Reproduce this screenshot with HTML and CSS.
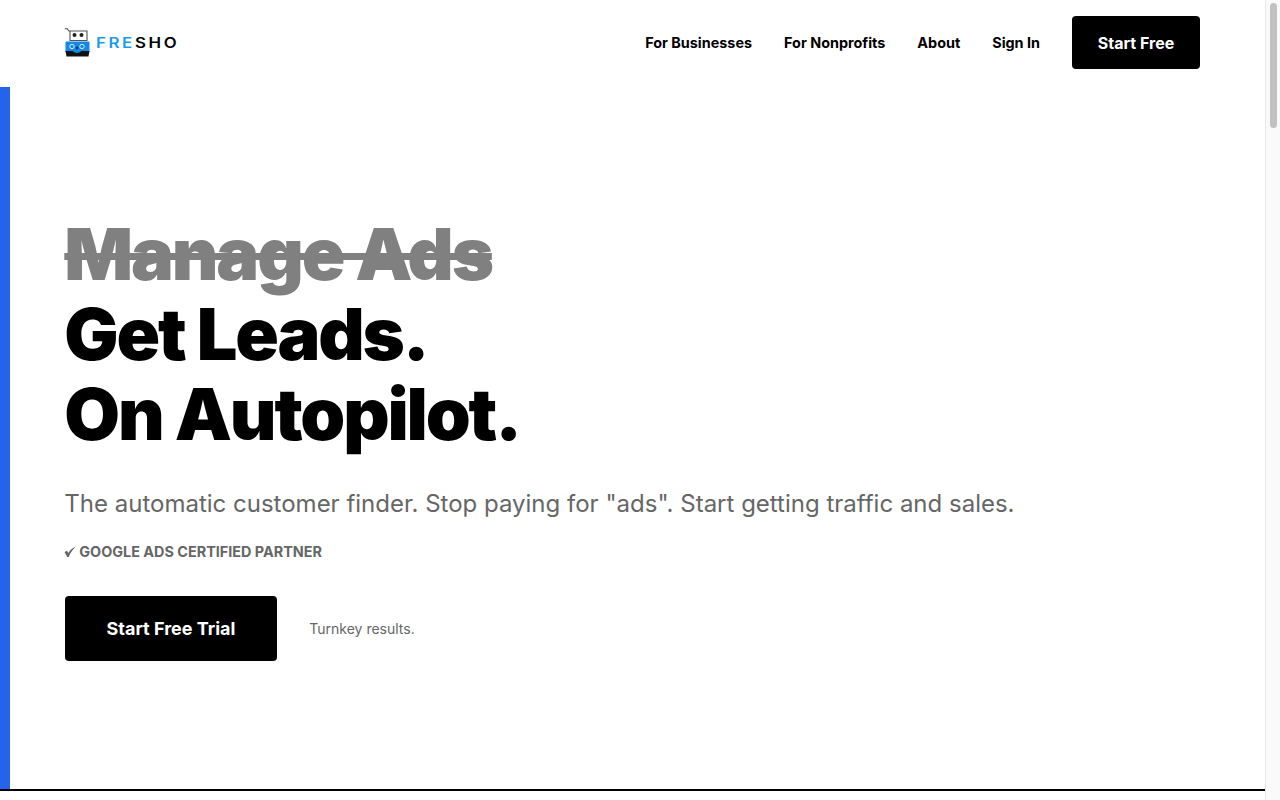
FILE: index.html
```html
<!DOCTYPE html>
<html lang="en">
<head>
    <meta charset="UTF-8">
    <meta name="viewport" content="width=device-width, initial-scale=1.0">
    <title>Fresho</title>
    <link rel="stylesheet" href="styles.css">
</head>
<body>
    <div class="page">
        <header class="site-header">
            <a class="logo" href="#">
                <svg class="logo-icon" width="26" height="30" viewBox="0 0 26 30" aria-hidden="true">
                    <path d="M0.8 0.8 H3.3 L5 3 H23 V12.5 H6 V3" fill="#fff" stroke="#555" stroke-width="1.1"/>
                    <circle cx="10.5" cy="7" r="2" fill="#222"/>
                    <circle cx="17.5" cy="7" r="2" fill="#222"/>
                    <rect x="1.5" y="13.5" width="24" height="11" rx="1" fill="#1688e6"/>
                    <circle cx="8" cy="18.5" r="2.2" fill="none" stroke="#d5edff" stroke-width="1"/>
                    <circle cx="18" cy="18.5" r="2.2" fill="none" stroke="#d5edff" stroke-width="1"/>
                    <circle cx="13" cy="20" r="1.4" fill="#0b3a66"/>
                    <path d="M1.5 23 H25.5 L24.5 28.5 H2.5 Z" fill="#111"/>
                    <path d="M8.5 23 Q13 27 17.5 23 Z" fill="#1688e6"/>
                </svg>
                <span class="logo-text"><span class="logo-blue">FRE</span>SHO</span>
            </a>
            <nav class="main-nav">
                <a href="#">For Businesses</a>
                <a href="#">For Nonprofits</a>
                <a href="#">About</a>
                <a href="#">Sign In</a>
                <a class="btn btn-small" href="#">Start Free</a>
            </nav>
        </header>

        <section class="hero">
            <h1>
                <span class="struck">Manage Ads</span><br>
                Get Leads.<br>
                On Autopilot.
            </h1>
            <p class="lead">The automatic customer finder. Stop paying for "ads". Start getting traffic and sales.</p>
            <p class="badge">
                <svg class="tick" width="11" height="10" viewBox="0 0 11 10" aria-hidden="true">
                    <path d="M0.6 5 L3 3.7 L4.4 6 C5.8 3.6 7.8 1.4 10.8 0 L10.9 0.6 C8.4 3.2 6.4 6 4.7 10 H3.2 Z" fill="#666"/>
                </svg>
                GOOGLE ADS CERTIFIED PARTNER
            </p>
            <div class="cta-row">
                <a class="btn btn-large" href="#">Start Free Trial</a>
                <span class="cta-note">Turnkey results.</span>
            </div>
        </section>

        <div class="rest"></div>
    </div>
    <div class="scrollbar"><div class="scrollbar-thumb"></div></div>
</body>
</html>
```

FILE: styles.css
```css
body {
    font-family: Inter, "Liberation Sans", sans-serif;
    margin: 0;
    padding: 0;
    height: 800px;
    overflow: hidden;
    display: flex;
    background: #fff;
    color: #000;
}
a {
    color: inherit;
    text-decoration: none;
}
.page {
    flex: 1;
    min-width: 0;
}
.scrollbar {
    width: 15px;
    box-sizing: border-box;
    padding: 3px 3px 0 4px;
    background: #fafafa;
    border-left: 1px solid #e8e8e8;
}
.scrollbar-thumb {
    height: 125px;
    background: #c1c1c1;
    border-radius: 4px;
}
.site-header {
    height: 87px;
    box-sizing: border-box;
    padding: 16px 65px 0 64.3px;
    display: flex;
    align-items: flex-start;
    justify-content: space-between;
}
.logo {
    display: flex;
    align-items: center;
    gap: 6px;
    margin-top: 12px;
}
.logo-text {
    font-size: 14px;
    font-weight: 600;
    letter-spacing: 2.2px;
    margin-top: -1px;
    transform: scaleX(1.2);
    transform-origin: left center;
}
.logo-blue {
    color: #1a9bf0;
}
.main-nav {
    display: flex;
    align-items: center;
    gap: 32px;
    font-size: 14.4px;
    font-weight: 700;
}
.btn {
    display: flex;
    align-items: center;
    justify-content: center;
    box-sizing: border-box;
    background: #000;
    color: #fff;
    border-radius: 4px;
    font-weight: 700;
}
.btn-small {
    width: 128px;
    height: 53.3px;
    font-size: 16px;
}
.btn-large {
    width: 212.7px;
    height: 65px;
    margin-left: 0.3px;
    font-size: 18px;
}
.hero {
    height: 702px;
    box-sizing: border-box;
    border-left: 10px solid #2563eb;
    padding: 127px 0 0 54.3px;
}
h1 {
    margin: 0;
    font-size: 72px;
    font-weight: 900;
    line-height: 80px;
    letter-spacing: -0.03em;
}
.struck {
    color: #808080;
    text-decoration: line-through;
}
.lead {
    margin: 32px 0 0;
    font-size: 24px;
    line-height: 36px;
    color: #666;
}
.badge {
    margin: 20px 0 0;
    display: flex;
    align-items: center;
    gap: 4px;
    font-size: 14.4px;
    line-height: 20px;
    font-weight: 700;
    color: #666;
}
.cta-row {
    margin-top: 34px;
    display: flex;
    align-items: center;
    gap: 32px;
}
.cta-note {
    font-size: 14px;
    color: #666;
}
.rest {
    border-top: 2px solid #000;
}
```
